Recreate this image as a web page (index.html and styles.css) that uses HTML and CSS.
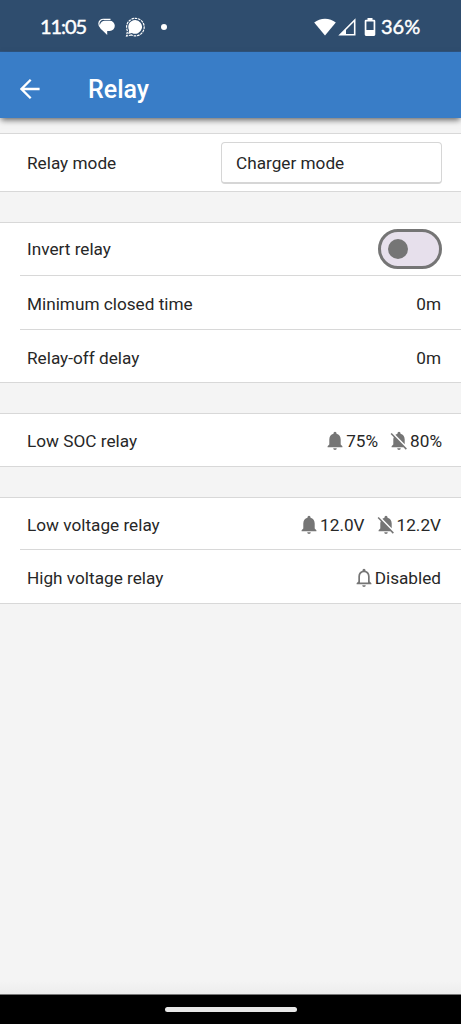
FILE: index.html
```html
<!DOCTYPE html>
<html lang="en">
<head>
<meta charset="utf-8">
<title>Relay</title>
<link rel="stylesheet" href="styles.css">
</head>
<body>
<svg class="defs" width="0" height="0" aria-hidden="true">
  <symbol id="bell" viewBox="0 0 16 20"><path d="M8 .8a1.500 1.500 0 0 0-1.500 1.500v.5C3.800 3.500 2.300 5.800 2.300 8.600v5L.6 15.300v.9h14.800v-.9l-1.700-1.700v-5c0-2.800-1.500-5.100-4.200-5.800v-.5A1.500 1.500 0 0 0 8 .8zM6.200 17.200a1.800 1.800 0 0 0 3.600 0z"/></symbol>
  <symbol id="bell-off" viewBox="0 0 18 20"><path d="M9 .8a1.500 1.500 0 0 0-1.500 1.500v.5c-.8.2-1.500.5-2.100 1l9.300 9.500V8.600c0-2.800-1.500-5.100-4.200-5.800v-.5A1.500 1.500 0 0 0 9 .8zM1.700 1.900.6 3l3.200 3.300c-.3.7-.5 1.500-.5 2.300v5l-1.700 1.700v.9h11.800l2.400 2.500 1.100-1.100zM7.200 17.200a1.800 1.800 0 0 0 3.600 0z"/></symbol>
  <symbol id="bell-outline" viewBox="0 0 16 20"><path fill-rule="evenodd" d="M8 .8a1.500 1.500 0 0 0-1.500 1.500v.5C3.800 3.500 2.300 5.800 2.300 8.600v5L.6 15.300v.9h14.800v-.9l-1.700-1.700v-5c0-2.800-1.500-5.100-4.200-5.800v-.5A1.500 1.500 0 0 0 8 .8zM4 14.600v-6c0-2.600 1.600-4.400 4-4.400s4 1.800 4 4.400v6zM6.200 17.200a1.800 1.800 0 0 0 3.600 0z"/></symbol>
</svg>
<div class="screen">
  <div class="status">
    <span class="clock">11:05</span>
    <svg class="chat" width="18" height="18" viewBox="0 0 18 18"><path fill="#fff" d="M7.500 2.700h4.200a5 5 0 0 1 0 10.200h-2.500v4.100L4.300 12.300A5.200 5.200 0 0 1 7.500 2.700z"/><path fill="none" stroke="#fff" stroke-width="1.200" d="M12.500 1.300H6A4.400 4.400 0 0 0 .9 5.400c0 1.500.5 2.600 1.500 3.600"/></svg>
    <svg class="signal-app" width="20" height="20" viewBox="0 0 20 20"><path fill="#fff" d="M10.200 3a6.900 6.900 0 1 1-3.300 13l-3.700.9.9-3.700A6.900 6.900 0 0 1 10.200 3z"/><path fill="none" stroke="#fff" stroke-width="1.200" stroke-dasharray="2.600 .8" d="M6.500 18l-5 1 1-5A8.800 8.800 0 1 1 6.500 18z"/></svg>
    <span class="more"></span>
    <span class="spacer"></span>
    <svg class="wifi" width="22" height="18" viewBox="0 0 22 18"><path fill="#fff" d="M.2 4.500C6-.6 16-.6 21.800 4.500L11 17.600z"/></svg>
    <svg class="cell" width="18" height="18" viewBox="0 0 18 18"><path fill="#fff" fill-rule="evenodd" d="M17.500.3v17.200H.3zM15.900 4 8 12v3.900h7.900z"/></svg>
    <svg class="battery" width="12" height="18" viewBox="0 0 12 18"><path fill="#fff" fill-rule="evenodd" d="M3.500 0h5v1.800H10q1.300 0 1.300 1.300v13.500q0 1.300-1.300 1.300H2Q.7 17.900.7 16.600V3.100Q.7 1.800 2 1.800h1.500zM2.400 3.500V12h7.200V3.500z"/></svg>
    <span class="percent">36%</span>
  </div>
  <header class="bar">
    <svg width="20" height="20" viewBox="0 0 20 20"><path fill="none" stroke="#fff" stroke-width="2.300" d="M19.600 10H1.800M10.700.8 1.500 10l9.200 9.200"/></svg>
    <h1>Relay</h1>
  </header>
  <main class="content">
    <section class="group mode">
      <div class="row"><span>Relay mode</span><div class="select">Charger mode</div></div>
    </section>
    <section class="group relay">
      <div class="row"><span>Invert relay</span><div class="toggle"><i></i></div></div>
      <div class="row"><span>Minimum closed time</span><span class="value">0m</span></div>
      <div class="row"><span>Relay-off delay</span><span class="value">0m</span></div>
    </section>
    <section class="group soc">
      <div class="row"><span>Low SOC relay</span><div class="alarms"><svg class="on"><use href="#bell"/></svg><span>75%</span><svg class="off"><use href="#bell-off"/></svg><span>80%</span></div></div>
    </section>
    <section class="group voltage">
      <div class="row"><span>Low voltage relay</span><div class="alarms"><svg class="on"><use href="#bell"/></svg><span>12.0V</span><svg class="off"><use href="#bell-off"/></svg><span>12.2V</span></div></div>
      <div class="row"><span>High voltage relay</span><div class="alarms"><svg class="on"><use href="#bell-outline"/></svg><span>Disabled</span></div></div>
    </section>
  </main>
  <footer class="nav"><span></span></footer>
</div>
</body>
</html>
```
FILE: styles.css
```css
* { box-sizing: border-box; }
body { margin: 0; font-family: Roboto, "Liberation Sans", sans-serif; }
svg { display: block; flex: none; }
.defs { position: absolute; }
.screen { width: 461px; height: 1024px; display: flex; flex-direction: column; background: #f4f4f4; overflow: hidden; }
.status { flex: none; height: 52px; background: #2f4d6e; border-bottom: 1px solid #305580; color: #fff; display: flex; align-items: center; padding: 2px 40px 0; font-family: Lato, sans-serif; font-weight: 400; font-size: 20px; line-height: 24px; -webkit-text-stroke: .45px #fff; }
.clock { width: 58px; letter-spacing: -1.1px; padding-bottom: 1px; }
.signal-app { margin-left: 9px; }
.more { width: 6px; height: 6px; border-radius: 50%; background: #fff; margin-left: 16px; }
.spacer { flex: 1; }
.cell { margin-left: 2px; }
.battery { margin: 0 5px 0 8px; }
.percent { width: 40px; padding-bottom: 1px; }
.bar { flex: none; height: 66px; background: #397dc7; color: #fff; display: flex; align-items: center; padding: 8px 20px 0; gap: 48px; box-shadow: 0 3px 6px -1px rgba(0,0,0,.6); z-index: 1; }
.bar h1 { margin: 0; padding-top: 2px; font-size: 25px; font-weight: 500; line-height: 30px; }
.content { flex: 1; padding-top: 15px; display: flex; flex-direction: column; gap: 30px; color: #272727; font-size: 17.2px; background: linear-gradient(#f4f4f4 98.500%, #ededed); }
.group { background: #fff; border: solid #d8d8d8; border-width: 1px 0; }
.row { height: 54px; padding: 2px 20px 0 7px; margin-left: 20px; display: flex; align-items: center; justify-content: space-between; }
.row + .row { border-top: 1px solid #d8d8d8; }
.mode .row { height: 57px; padding-top: 0; }
.relay .row:first-child { height: 52px; padding-top: 0; }
.relay .row:last-child { height: 53px; padding-top: 3px; }
.soc .row { height: 52px; }
.voltage .row:first-child { height: 51px; }
.voltage .row:last-child { padding-top: 3px; }
.select { width: 221px; height: 42px; margin-right: -1px; border: 1px solid #d6d6d6; border-bottom-width: 2px; border-radius: 4px; display: flex; align-items: center; padding: 2px 0 0 14px; }
.toggle { width: 64px; height: 40px; margin-right: -1px; border: 3px solid #757575; border-radius: 20px; background: #e7e0ec; display: flex; align-items: center; padding-left: 7px; }
.toggle i { width: 20px; height: 20px; border-radius: 50%; background: #757575; }
.alarms { display: flex; align-items: center; margin-right: -1px; }
.voltage .alarms { margin-right: 0; }
.alarms svg { fill: #757575; height: 20px; }
.on { width: 16px; margin-right: 3px; }
.off { width: 18px; margin: 0 2px 0 12px; }
.nav { flex: none; height: 30px; background: #000; border-top: 1px solid #777; display: flex; justify-content: center; padding-top: 12px; }
.nav span { width: 132px; height: 5px; border-radius: 3px; background: #e8e8e8; }
```
